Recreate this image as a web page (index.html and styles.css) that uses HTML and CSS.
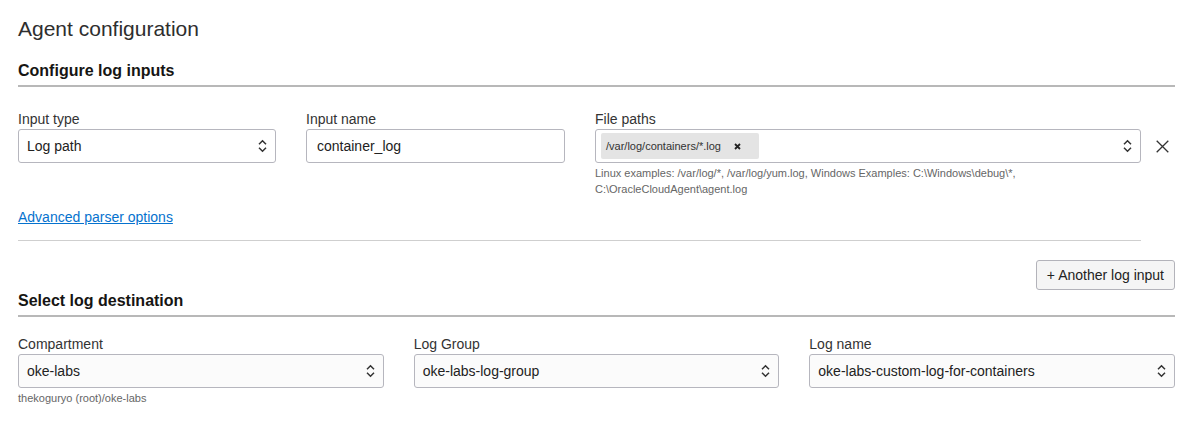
FILE: index.html
```html
<!DOCTYPE html>
<html lang="en">
<head>
<meta charset="utf-8">
<title>Agent configuration</title>
<link rel="stylesheet" href="styles.css">
</head>
<body>
<main class="page">
  <h1 class="title">Agent configuration</h1>

  <section class="section">
    <h2 class="section-heading">Configure log inputs</h2>
    <div class="input-row">
      <div class="input-fields">
        <div class="field">
          <label class="field-label">Input type</label>
          <div class="select">
            <span class="select-value">Log path</span>
            <svg class="chevrons" width="9" height="14" viewBox="0 0 9 14"><path d="M1 5.2 L4.5 1.7 L8 5.2 M1 8.8 L4.5 12.3 L8 8.8" fill="none" stroke="#333" stroke-width="1.5"/></svg>
          </div>
        </div>
        <div class="field">
          <label class="field-label">Input name</label>
          <input class="text-input" type="text" value="container_log">
        </div>
        <div class="field">
          <label class="field-label">File paths</label>
          <div class="select multi">
            <span class="chip">/var/log/containers/*.log
              <svg class="chip-x" width="7" height="7" viewBox="0 0 7 7"><path d="M1 1 L6 6 M6 1 L1 6" stroke="#222" stroke-width="1.8" fill="none"/></svg>
            </span>
            <svg class="chevrons" width="9" height="14" viewBox="0 0 9 14"><path d="M1 5.2 L4.5 1.7 L8 5.2 M1 8.8 L4.5 12.3 L8 8.8" fill="none" stroke="#333" stroke-width="1.5"/></svg>
          </div>
          <p class="help">Linux examples: /var/log/*, /var/log/yum.log, Windows Examples: C:\Windows\debug\*, C:\OracleCloudAgent\agent.log</p>
        </div>
      </div>
      <button class="remove" type="button" aria-label="Remove">
        <svg width="13" height="13" viewBox="0 0 13 13"><path d="M0.7 0.7 L12.3 12.3 M12.3 0.7 L0.7 12.3" stroke="#333" stroke-width="1.3" fill="none"/></svg>
      </button>
    </div>
    <div class="link-row"><a class="link" href="#">Advanced parser options</a></div>
    <div class="divider"></div>
  </section>

  <div class="actions">
    <button class="btn" type="button">+ Another log input</button>
  </div>

  <section class="section">
    <h2 class="section-heading tight">Select log destination</h2>
    <div class="dest-grid">
      <div class="field">
        <label class="field-label">Compartment</label>
        <div class="select soft">
          <span class="select-value">oke-labs</span>
          <svg class="chevrons" width="9" height="14" viewBox="0 0 9 14"><path d="M1 5.2 L4.5 1.7 L8 5.2 M1 8.8 L4.5 12.3 L8 8.8" fill="none" stroke="#333" stroke-width="1.5"/></svg>
        </div>
        <p class="help">thekoguryo (root)/oke-labs</p>
      </div>
      <div class="field">
        <label class="field-label">Log Group</label>
        <div class="select soft">
          <span class="select-value">oke-labs-log-group</span>
          <svg class="chevrons" width="9" height="14" viewBox="0 0 9 14"><path d="M1 5.2 L4.5 1.7 L8 5.2 M1 8.8 L4.5 12.3 L8 8.8" fill="none" stroke="#333" stroke-width="1.5"/></svg>
        </div>
      </div>
      <div class="field">
        <label class="field-label">Log name</label>
        <div class="select soft">
          <span class="select-value">oke-labs-custom-log-for-containers</span>
          <svg class="chevrons" width="9" height="14" viewBox="0 0 9 14"><path d="M1 5.2 L4.5 1.7 L8 5.2 M1 8.8 L4.5 12.3 L8 8.8" fill="none" stroke="#333" stroke-width="1.5"/></svg>
        </div>
      </div>
    </div>
  </section>
</main>
</body>
</html>
```

FILE: styles.css
```css
* { box-sizing: border-box; }

body {
  margin: 0;
  background: #fff;
  font-family: "Liberation Sans", Arial, sans-serif;
  color: #333;
}

.page {
  padding: 0 18px;
}

.title {
  margin: 17px 0 0;
  font-size: 21px;
  line-height: 24px;
  font-weight: normal;
  color: #2e2e2e;
}

.section-heading {
  margin: 21px 0 0;
  padding-bottom: 5px;
  font-size: 16px;
  line-height: 18px;
  font-weight: bold;
  color: #161513;
  border-bottom: 2px solid #b8b8b8;
}

.section-heading.tight {
  margin-top: 2px;
}

.input-row {
  display: flex;
  margin-top: 24px;
}

.input-fields {
  width: 1123px;
  display: grid;
  grid-template-columns: 258px 259px 1fr;
  column-gap: 30px;
  align-items: start;
}

.field {
  display: flex;
  flex-direction: column;
  min-width: 0;
}

.field-label {
  font-size: 14px;
  line-height: 16px;
  margin-bottom: 2px;
  color: #333;
}

.select {
  height: 34px;
  border: 1px solid #b6b6be;
  border-radius: 3px;
  background: #fff;
  padding: 0 8px 0 8px;
  display: flex;
  align-items: center;
  justify-content: space-between;
}

.select.soft {
  background: #fbfbfb;
}

.select.multi {
  padding-left: 5px;
}

.select-value {
  font-size: 14px;
  line-height: 16px;
  color: #222;
  white-space: nowrap;
}

.chevrons {
  flex: none;
  display: block;
}

.chip {
  height: 26px;
  display: inline-flex;
  align-items: center;
  gap: 13px;
  padding: 0 18px 0 5px;
  background: #e4e4e4;
  border-radius: 2px;
  font-size: 11px;
  color: #333;
  white-space: nowrap;
}

.chip-x {
  display: block;
}

.text-input {
  height: 34px;
  border: 1px solid #b6b6be;
  border-radius: 3px;
  background: #fff;
  padding: 0 10px;
  font-family: inherit;
  font-size: 14px;
  color: #222;
  outline: none;
}

.help {
  margin: 2px 0 0;
  font-size: 11px;
  line-height: 16px;
  color: #666;
  max-width: 440px;
}

.remove {
  width: 34px;
  height: 34px;
  margin-top: 18px;
  padding: 0 6px 0 0;
  border: 0;
  background: transparent;
  display: flex;
  align-items: center;
  justify-content: flex-end;
}

.remove svg { display: block; }

.link-row {
  margin-top: 12px;
  font-size: 14px;
  line-height: 16px;
}

.link {
  color: #0572ce;
  text-decoration: underline;
}

.divider {
  width: 1123px;
  margin-top: 15px;
  border-top: 1px solid #cfcfcf;
}

.actions {
  display: flex;
  justify-content: flex-end;
  margin-top: 19px;
}

.btn {
  height: 30px;
  padding: 0 10px;
  border: 1px solid #b3b3ba;
  border-radius: 3px;
  background: #f5f5f5;
  font-family: inherit;
  font-size: 14px;
  color: #222;
}

.dest-grid {
  margin-top: 19px;
  display: grid;
  grid-template-columns: 1fr 1fr 1fr;
  column-gap: 30px;
  align-items: start;
}
```
